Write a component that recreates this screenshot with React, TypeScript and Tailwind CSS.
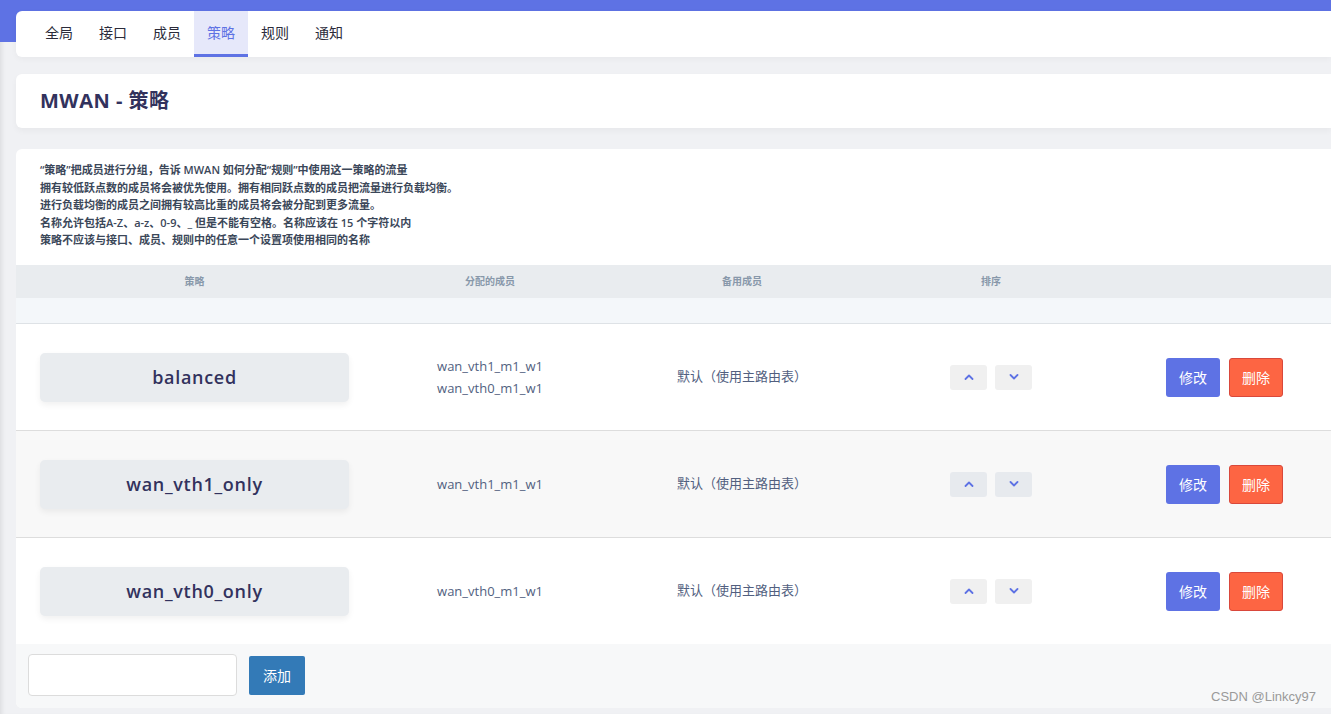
import React from "react";

interface Policy {
  name: string;
  members: string[];
  backup: string;
}

const policies: Policy[] = [
  { name: "balanced", members: ["wan_vth1_m1_w1", "wan_vth0_m1_w1"], backup: "默认（使用主路由表）" },
  { name: "wan_vth1_only", members: ["wan_vth1_m1_w1"], backup: "默认（使用主路由表）" },
  { name: "wan_vth0_only", members: ["wan_vth0_m1_w1"], backup: "默认（使用主路由表）" },
];

const tabs = ["全局", "接口", "成员", "策略", "规则", "通知"];

const notes = [
  "“策略”把成员进行分组，告诉 MWAN 如何分配“规则”中使用这一策略的流量",
  "拥有较低跃点数的成员将会被优先使用。拥有相同跃点数的成员把流量进行负载均衡。",
  "进行负载均衡的成员之间拥有较高比重的成员将会被分配到更多流量。",
  "名称允许包括A-Z、a-z、0-9、_ 但是不能有空格。名称应该在 15 个字符以内",
  "策略不应该与接口、成员、规则中的任意一个设置项使用相同的名称",
];

function Chevron({ up }: { up?: boolean }) {
  return (
    <svg width="10" height="6" viewBox="0 0 10 6" fill="none">
      <polyline
        points={up ? "1.5,5 5,1.5 8.5,5" : "1.5,1 5,4.5 8.5,1"}
        stroke="#5e72e4"
        strokeWidth="1.8"
        strokeLinecap="round"
        strokeLinejoin="round"
      />
    </svg>
  );
}

const grid = "grid grid-cols-[357px_234px_270px_228px_1fr]";

export default function App() {
  return (
    <div
      className="relative min-h-[714px] overflow-hidden bg-[#f0f1f4] shadow-[inset_5px_0_4px_-3px_rgba(0,0,0,0.08)]"
      style={{ fontFamily: '"Open Sans", "Noto Sans CJK SC", sans-serif' }}
    >
      <div className="h-[42px] bg-[#5e72e4]" />
      <div className="-mt-[31px] flex flex-col pl-4">
        {/* tabs */}
        <div className="flex h-[46px] rounded-l-[6px] bg-white pl-4 shadow-[0_2px_6px_rgba(0,0,0,0.04)]">
          {tabs.map((t) => (
            <div
              key={t}
              className={`flex h-full items-center border-b-[3px] px-[13px] text-[14px] ${
                t === "策略"
                  ? "border-[#5e72e4] bg-[#e6e8fa] text-[#5e72e4]"
                  : "border-transparent text-[#2b2b3a]"
              }`}
            >
              {t}
            </div>
          ))}
        </div>

        {/* title */}
        <div className="mt-[17px] flex h-[54px] items-center rounded-l-[6px] bg-white pl-6 shadow-[0_3px_6px_rgba(0,0,0,0.04)]">
          <h2 className="text-[20px] font-bold tracking-[0.5px] text-[#32325d]">MWAN - 策略</h2>
        </div>

        {/* main */}
        <div className="mt-[21px] flex h-[559px] flex-col overflow-hidden rounded-l-[6px] bg-white">
          <div className="h-[116px] pl-6 pt-[12px] text-[11px] font-semibold leading-[17.5px] text-[#3b4759]">
            {notes.map((n) => (
              <div key={n}>{n}</div>
            ))}
          </div>

          <div className={`${grid} h-[33px] items-center bg-[#e9ecef] text-center text-[10px] font-semibold text-[#8898aa]`}>
            <div>策略</div>
            <div>分配的成员</div>
            <div>备用成员</div>
            <div>排序</div>
            <div />
          </div>
          <div className="h-[26px] border-b border-[#dee2e6] bg-[#f4f7fa]" />

          {policies.map((p, i) => (
            <div
              key={p.name}
              className={`${grid} items-center ${i === 1 ? "bg-[#f8f8f8]" : "bg-white"} ${
                i === policies.length - 1 ? "h-[106px]" : "h-[107px] border-b border-[#dddddd]"
              }`}
            >
              <div className="pl-6">
                <div className="flex h-[49px] w-[309px] items-center justify-center rounded-[5px] bg-[#e9ecef] text-[18px] font-semibold tracking-[0.7px] text-[#32325d] shadow-[0_3px_6px_rgba(0,0,0,0.06)]">
                  {p.name}
                </div>
              </div>
              <div className="text-center text-[13px] leading-[22px] text-[#525f7f]">
                {p.members.map((m) => (
                  <div key={m}>{m}</div>
                ))}
              </div>
              <div className="text-center text-[13px] text-[#525f7f]">{p.backup}</div>
              <div className="flex justify-center gap-2">
                <button
                  type="button"
                  className={`flex h-[25px] w-[37px] items-center justify-center rounded-[3px] ${
                    i === 1 ? "bg-[#e7eaee]" : "bg-[#f0f0f0]"
                  }`}
                >
                  <Chevron up />
                </button>
                <button
                  type="button"
                  className={`flex h-[25px] w-[37px] items-center justify-center rounded-[3px] ${
                    i === 1 ? "bg-[#e7eaee]" : "bg-[#f0f0f0]"
                  }`}
                >
                  <Chevron />
                </button>
              </div>
              <div className="flex gap-[9px] pl-[61px]">
                <button
                  type="button"
                  className="h-[39px] w-[54px] rounded-[3px] bg-[#5e72e4] text-[14px] text-white"
                >
                  修改
                </button>
                <button
                  type="button"
                  className="h-[39px] w-[54px] rounded-[3px] border border-[#d9483b] bg-[#fd6543] text-[14px] text-white"
                >
                  删除
                </button>
              </div>
            </div>
          ))}

          <div className="flex flex-1 items-start gap-3 bg-[#f7f8f9] pl-3 pt-[10px]">
            <input
              type="text"
              className="h-[42px] w-[209px] rounded-[4px] border border-[#dcdcdc] bg-white px-2 outline-none"
            />
            <button
              type="button"
              className="mt-[2px] h-[39px] w-[56px] rounded-[2px] bg-[#337ab7] text-[14px] text-white"
            >
              添加
            </button>
          </div>
        </div>
      </div>

      <div
        className="absolute bottom-[8px] right-[15px] text-[13px] text-[#9a9a9a]"
        style={{ fontFamily: '"Liberation Sans", sans-serif' }}
      >
        CSDN @Linkcy97
      </div>
    </div>
  );
}
